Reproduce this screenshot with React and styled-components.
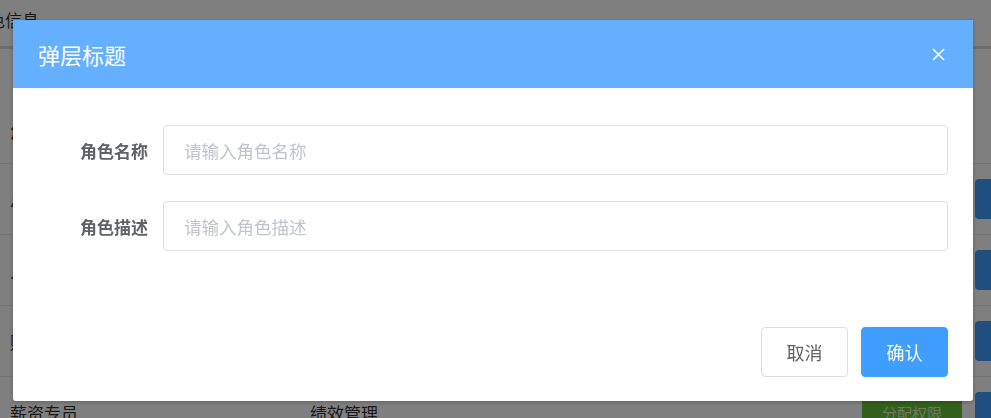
import React from 'react'
import styled, { createGlobalStyle } from 'styled-components'

const GlobalStyle = createGlobalStyle`
  html, body {
    margin: 0;
    padding: 0;
    background: #ffffff;
    overflow: hidden;
  }
  body {
    font-family: "Noto Sans CJK SC", "Noto Sans", sans-serif;
    color: #333333;
  }
`

const Page = styled.div`
  width: 991px;
  height: 418px;
  overflow: hidden;
`

const PageHeader = styled.div`
  height: 46px;
  border-bottom: 3px solid #dcdcdc;
  font-size: 17px;
  line-height: 40px;
  color: #333;
  overflow: hidden;
`

const HeaderText = styled.span`
  display: inline-block;
  margin-left: -29px;
`

const TableHead = styled.div`
  height: 115px;
  display: flex;
  align-items: flex-end;
  padding-bottom: 20px;
  box-sizing: border-box;
  font-weight: bold;
  font-size: 16px;
  padding-left: 10px;
  border-bottom: 1px solid #e8e8e8;
`

const Row = styled.div`
  height: 71px;
  display: flex;
  align-items: center;
  border-bottom: 1px solid #e8e8e8;
  box-sizing: border-box;
  font-size: 17px;
  color: #333;
`

const Cell = styled.div`
  width: ${p => p.$w}px;
  flex-shrink: 0;
  padding-left: ${p => p.$pl || 0}px;
  box-sizing: border-box;
`

const Actions = styled.div`
  display: flex;
  align-items: center;
  gap: 13px;
`

const SmallBtn = styled.div`
  width: 100px;
  height: 28px;
  background: #67c23a;
  color: #d8f0cc;
  font-size: 15px;
  display: flex;
  align-items: center;
  justify-content: center;
`

const BlueBtn = styled.div`
  width: 80px;
  height: 40px;
  border-radius: 4px;
  background: #409eff;
  flex-shrink: 0;
`

const Mask = styled.div`
  position: fixed;
  inset: 0;
  background: rgba(0, 0, 0, 0.5);
  display: flex;
  align-items: flex-start;
  justify-content: flex-start;
  padding: 20px 0 0 13px;
`

const Dialog = styled.div`
  width: 960px;
  background: #ffffff;
  border-radius: 0 0 3px 3px;
  box-shadow: 0 1px 4px rgba(0, 0, 0, 0.25);
  overflow: hidden;
`

const DialogHeader = styled.div`
  height: 68px;
  background: #64b0ff;
  display: flex;
  align-items: center;
  justify-content: space-between;
  padding: 0 28px 0 25px;
`

const Title = styled.div`
  color: #ffffff;
  font-size: 22px;
  line-height: 1;
`

const CloseBtn = styled.div`
  width: 14px;
  height: 14px;
  display: flex;
  align-items: center;
  justify-content: center;
  cursor: pointer;
`

const Body = styled.div`
  padding: 37px 25px 0 0;
  display: flex;
  flex-direction: column;
  gap: 26px;
`

const FormRow = styled.div`
  display: flex;
  align-items: center;
`

const Label = styled.label`
  width: 135px;
  padding-right: 15px;
  text-align: right;
  font-size: 17px;
  font-weight: bold;
  color: #606266;
  flex-shrink: 0;
`

const Input = styled.input`
  flex: 1;
  height: 50px;
  box-sizing: border-box;
  border: 1px solid #dcdfe6;
  border-radius: 4px;
  padding: 0 20px;
  font-size: 17.5px;
  font-family: inherit;
  color: #606266;
  outline: none;
  &::placeholder {
    color: #c0c4cc;
  }
`

const Footer = styled.div`
  display: flex;
  justify-content: flex-end;
  gap: 13px;
  padding: 76px 25px 24px 0;
`

const Button = styled.button`
  width: 87px;
  height: 50px;
  border-radius: 4px;
  font-size: 18px;
  font-family: inherit;
  cursor: pointer;
  border: 1px solid ${p => (p.$primary ? '#409eff' : '#dcdfe6')};
  background: ${p => (p.$primary ? '#409eff' : '#ffffff')};
  color: ${p => (p.$primary ? '#ffffff' : '#606266')};
`

const rows = [
  { name: '总经理', dept: '全部权限' },
  { name: '人事专员', dept: '人事管理' },
  { name: '财务专员', dept: '财务管理' },
  { name: '薪资专员', dept: '绩效管理' },
]

function App() {
  return (
    <>
      <GlobalStyle />
      <Page>
        <PageHeader>
          <HeaderText>角色信息</HeaderText>
        </PageHeader>
        <TableHead>角色</TableHead>
        {rows.map(r => (
          <Row key={r.name}>
            <Cell $w={310} $pl={10}>{r.name}</Cell>
            <Cell $w={552}>{r.dept}</Cell>
            <Actions>
              <SmallBtn>分配权限</SmallBtn>
              <BlueBtn />
            </Actions>
          </Row>
        ))}
      </Page>
      <Mask>
        <Dialog>
          <DialogHeader>
            <Title>弹层标题</Title>
            <CloseBtn>
              <svg width="13" height="13" viewBox="0 0 13 13">
                <path d="M1 1 L12 12 M12 1 L1 12" stroke="#ffffff" strokeWidth="1.6" fill="none" />
              </svg>
            </CloseBtn>
          </DialogHeader>
          <Body>
            <FormRow>
              <Label>角色名称</Label>
              <Input placeholder="请输入角色名称" />
            </FormRow>
            <FormRow>
              <Label>角色描述</Label>
              <Input placeholder="请输入角色描述" />
            </FormRow>
          </Body>
          <Footer>
            <Button>取消</Button>
            <Button $primary>确认</Button>
          </Footer>
        </Dialog>
      </Mask>
    </>
  )
}

export default App
